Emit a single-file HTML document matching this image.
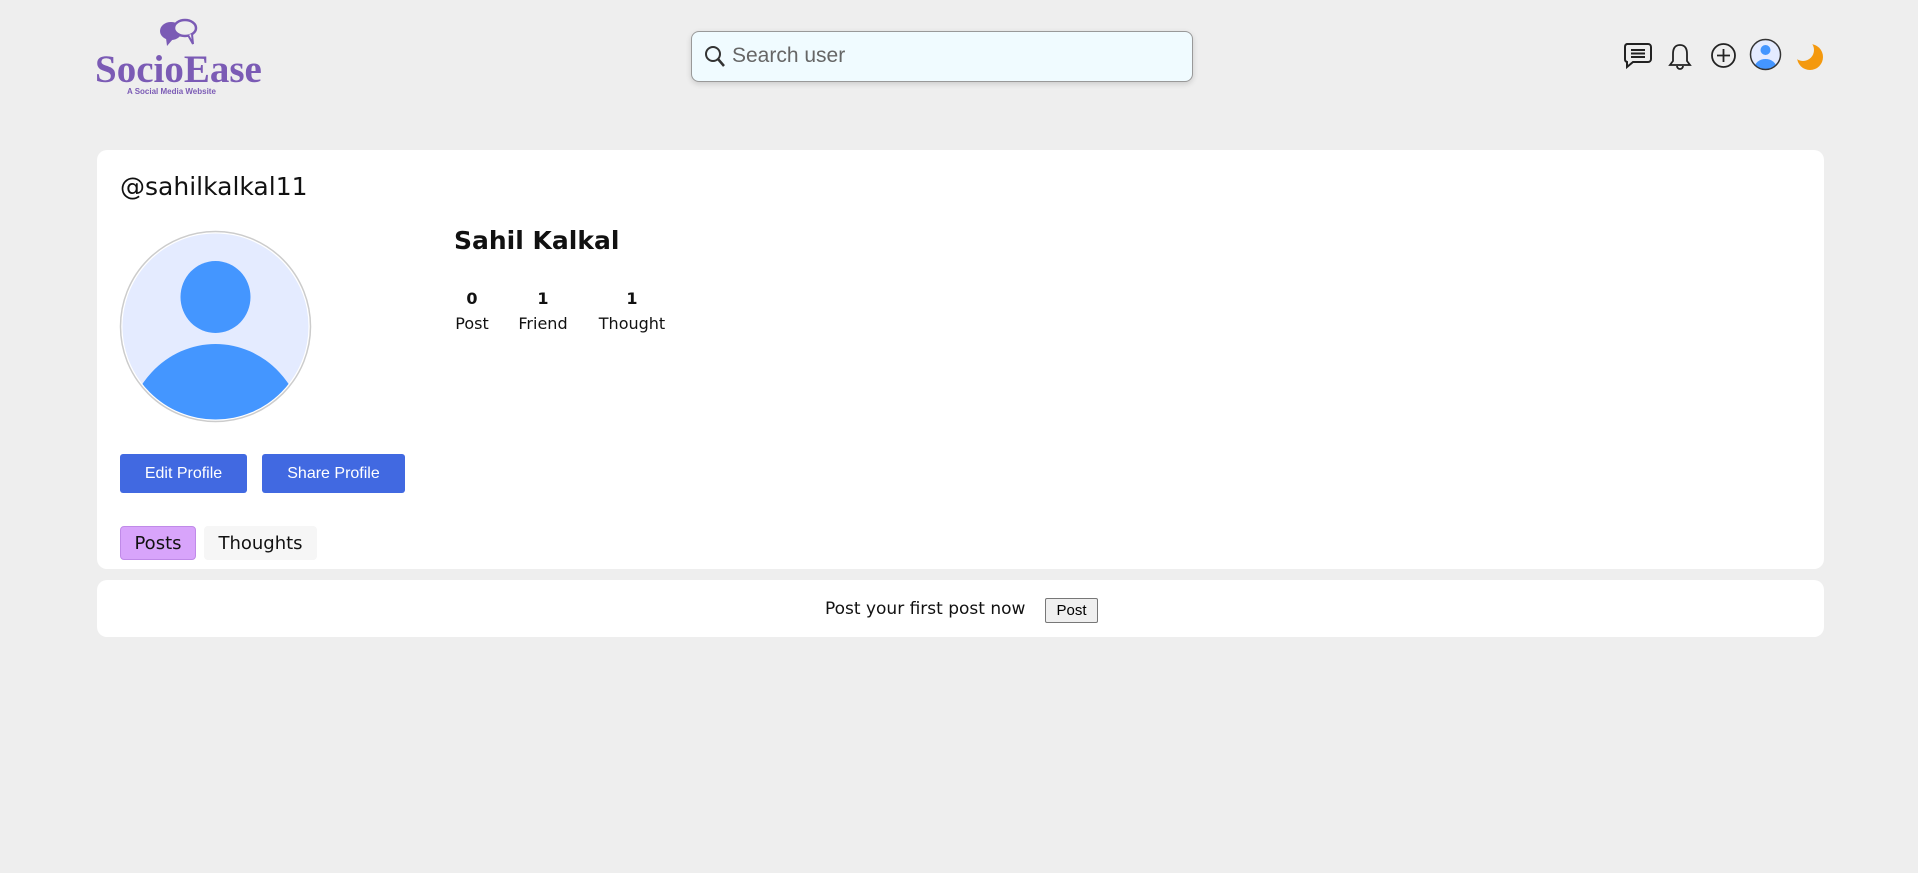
<!DOCTYPE html>
<html><head><meta charset="utf-8"><style>
*{box-sizing:border-box;margin:0;padding:0}
body{width:1918px;height:873px;background:#eeeeee;font-family:"Liberation Sans",sans-serif;position:relative;overflow:hidden}
.abs{position:absolute}
.card{position:absolute;left:97px;width:1727px;background:#fff;border-radius:10px}
.btn{position:absolute;background:#4169e1;color:#fff;font-size:16px;border-radius:3px;display:flex;align-items:center;justify-content:center}
.stat{position:absolute;text-align:center;font-family:"DejaVu Sans","Liberation Sans",sans-serif;font-size:16px;color:#111}
.stat b{display:block;font-size:16px;margin-bottom:6px}
</style></head><body>
<!-- logo -->
<svg class="abs" style="left:158px;top:18px" width="42" height="30" viewBox="0 0 42 30">
<ellipse cx="13" cy="13" rx="11" ry="9" fill="#7b5bb5"/>
<path d="M8 20 L9 28 L15 21Z" fill="#7b5bb5"/>
<ellipse cx="27" cy="10" rx="11" ry="8" fill="#eee" stroke="#7b5bb5" stroke-width="2.5"/>
<path d="M30 17 L35 26 L34 16" fill="#eee" stroke="#7b5bb5" stroke-width="2"/>
</svg>
<div class="abs" style="left:95px;top:47px;font-family:'Liberation Serif',serif;font-weight:bold;font-size:39px;color:#7b5bb5">SocioEase</div>
<div class="abs" style="left:127px;top:87px;font-size:8px;font-weight:bold;color:#7b5bb5">A Social Media Website</div>
<!-- search -->
<div class="abs" style="left:691px;top:31px;width:502px;height:51px;background:#f0fbff;border:1px solid #999;border-radius:8px;box-shadow:0 2px 6px rgba(0,0,0,.15)"></div>
<svg class="abs" style="left:704px;top:45px" width="22" height="24" viewBox="0 0 22 24"><circle cx="9" cy="9" r="7" fill="none" stroke="#333" stroke-width="2"/><path d="M14 14 L20 21" stroke="#333" stroke-width="2.5"/></svg>
<div class="abs" style="left:732px;top:44px;font-size:21px;color:#666">Search user</div>
<!-- icons -->
<svg class="abs" style="left:1623px;top:42px" width="30" height="28" viewBox="0 0 30 28"><path d="M4 2 H25 A3 3 0 0 1 28 5 V17 A3 3 0 0 1 25 20 H10 L4 25 V20 A3 3 0 0 1 2 17 V5 A3 3 0 0 1 4 2Z" fill="none" stroke="#222" stroke-width="2"/><path d="M8 8H22M8 11.5H22M8 15H22" stroke="#222" stroke-width="2"/></svg>
<svg class="abs" style="left:1667px;top:42px" width="26" height="30" viewBox="0 0 26 30"><path d="M13 3 C7 3 6 8 6 12 V19 L3 23 H23 L20 19 V12 C20 8 19 3 13 3Z" fill="none" stroke="#222" stroke-width="1.8"/><path d="M10 24 A3 3 0 0 0 16 24" fill="none" stroke="#222" stroke-width="1.8"/></svg>
<svg class="abs" style="left:1710px;top:42px" width="27" height="27" viewBox="0 0 27 27"><circle cx="13.5" cy="13.5" r="11.5" fill="none" stroke="#222" stroke-width="1.8"/><path d="M13.5 7V20M7 13.5H20" stroke="#222" stroke-width="1.8"/></svg>
<svg class="abs" style="left:1749px;top:38px" width="33" height="33" viewBox="0 0 33 33"><defs><clipPath id="c1"><circle cx="16.5" cy="16.5" r="14.5"/></clipPath></defs><circle cx="16.5" cy="16.5" r="14.5" fill="#e4ebff"/><g clip-path="url(#c1)"><circle cx="16.5" cy="12" r="5" fill="#4496ff"/><ellipse cx="16.5" cy="30" rx="11" ry="9" fill="#4496ff"/></g><circle cx="16.5" cy="16.5" r="15" fill="none" stroke="#333" stroke-width="1.5"/></svg>
<svg class="abs" style="left:1795px;top:42px" width="30" height="30" viewBox="0 0 30 30"><defs><mask id="m"><rect width="30" height="30" fill="#fff"/><circle cx="8" cy="8" r="11" fill="#000"/></mask></defs><circle cx="15" cy="15" r="13" fill="#f4990e" mask="url(#m)"/></svg>
<!-- card 1 -->
<div class="card" style="top:150px;height:419px"></div>
<div class="abs" style="left:120px;top:172px;font-family:'DejaVu Sans',sans-serif;font-size:25px;color:#111">@sahilkalkal11</div>
<svg class="abs" style="left:119px;top:230px" width="193" height="193" viewBox="0 0 193 193"><defs><clipPath id="c2"><circle cx="96.5" cy="96.5" r="93"/></clipPath></defs><circle cx="96.5" cy="96.5" r="93" fill="#e4ebff"/><g clip-path="url(#c2)"><ellipse cx="96.5" cy="67" rx="35" ry="36" fill="#4496ff"/><ellipse cx="96.5" cy="210" rx="90" ry="96" fill="#4496ff"/></g><circle cx="96.5" cy="96.5" r="95" fill="none" stroke="#ccc" stroke-width="1.5"/></svg>
<div class="abs" style="left:454px;top:226px;font-family:'DejaVu Sans',sans-serif;font-weight:bold;font-size:25px;color:#111">Sahil Kalkal</div>
<div class="stat" style="left:453px;top:289px;width:38px"><b>0</b>Post</div>
<div class="stat" style="left:513px;top:289px;width:60px"><b>1</b>Friend</div>
<div class="stat" style="left:593px;top:289px;width:78px"><b>1</b>Thought</div>
<div class="btn" style="left:120px;top:454px;width:127px;height:39px">Edit Profile</div>
<div class="btn" style="left:262px;top:454px;width:143px;height:39px">Share Profile</div>
<div class="abs" style="left:120px;top:526px;width:76px;height:34px;background:#d8a4fb;border:1px solid #c08ae8;border-radius:4px;font-family:'DejaVu Sans',sans-serif;font-size:18px;color:#111;display:flex;align-items:center;justify-content:center">Posts</div>
<div class="abs" style="left:204px;top:526px;width:113px;height:34px;background:#f6f6f6;border-radius:4px;font-family:'DejaVu Sans',sans-serif;font-size:18px;color:#111;display:flex;align-items:center;justify-content:center">Thoughts</div>
<!-- card 2 -->
<div class="card" style="top:580px;height:57px"></div>
<div class="abs" style="left:825px;top:599px;font-family:'DejaVu Sans',sans-serif;font-size:17px;color:#111">Post your first post now</div>
<div class="abs" style="left:1045px;top:598px;width:53px;height:25px;background:#efefef;border:1px solid #777;border-radius:2px;font-size:15px;display:flex;align-items:center;justify-content:center;color:#000">Post</div>
</body></html>
